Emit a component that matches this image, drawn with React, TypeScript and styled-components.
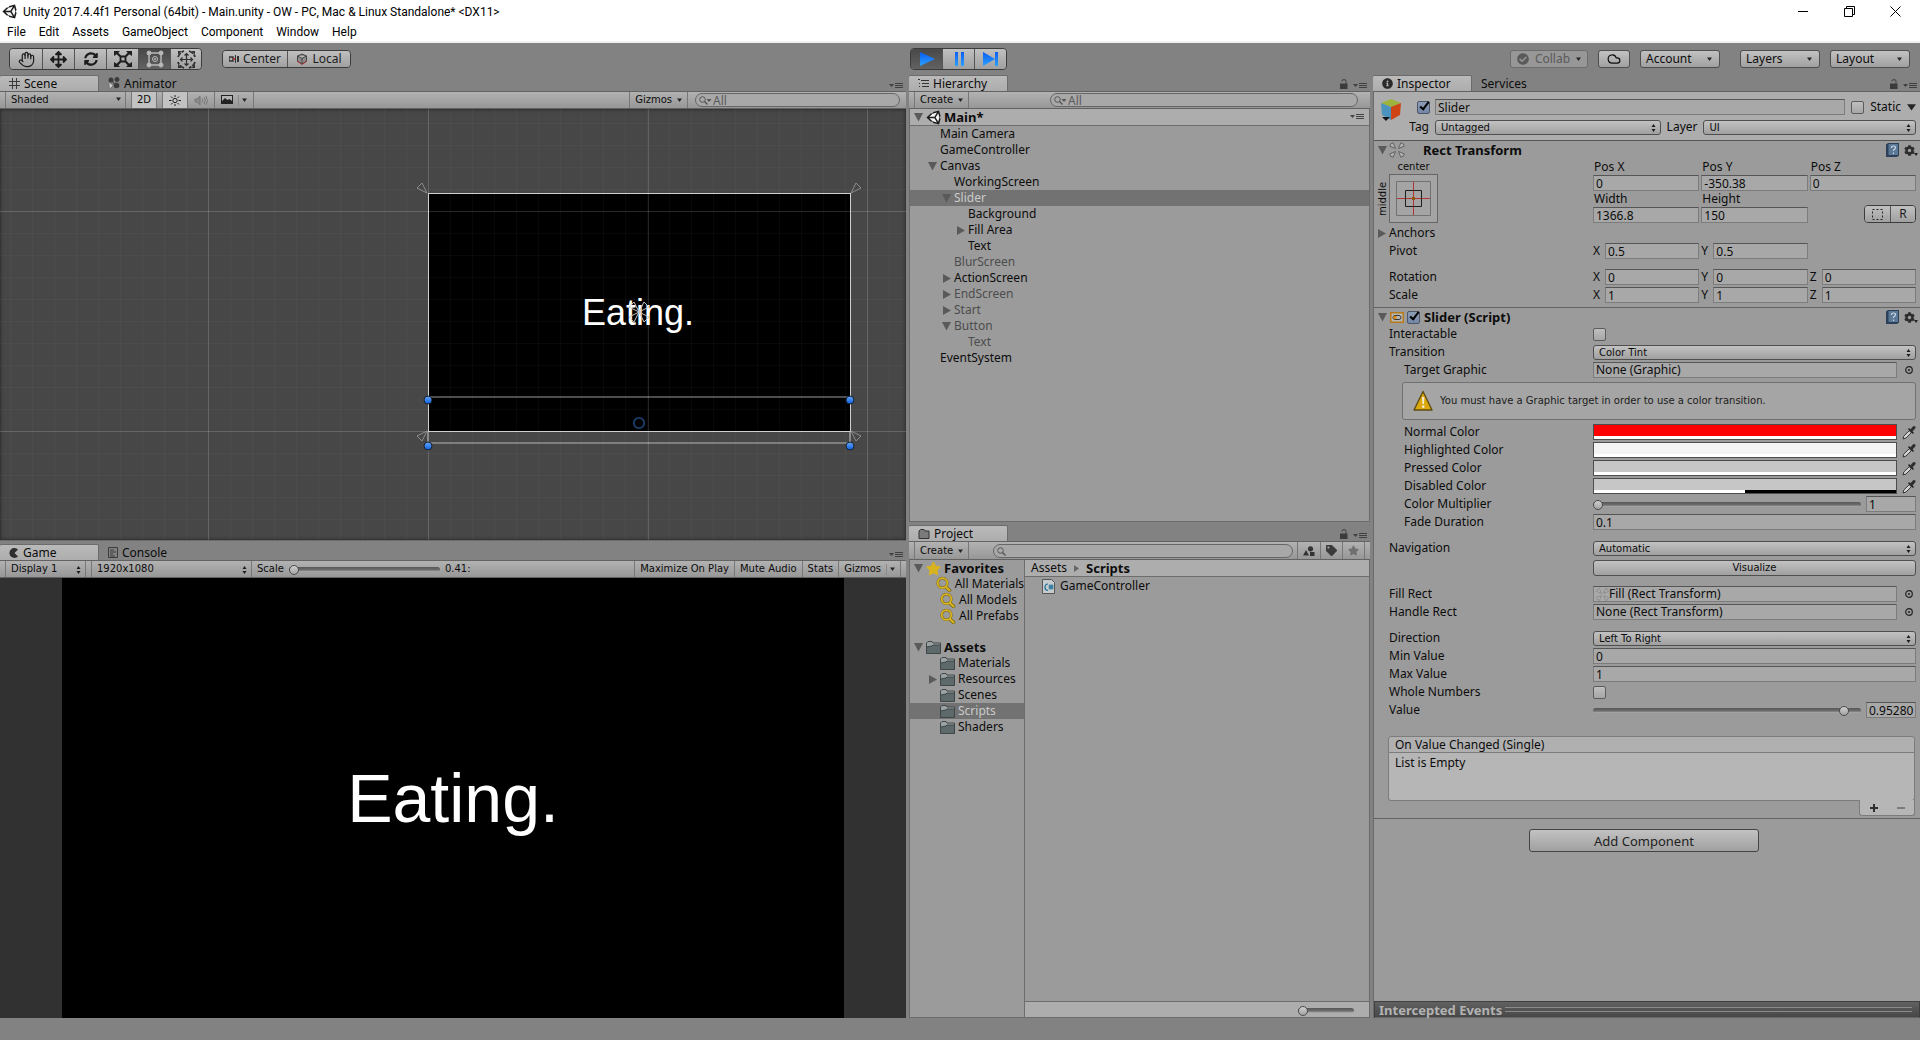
import React, { ReactNode, useId } from 'react';
import styled, { createGlobalStyle, css } from 'styled-components';
import { FaArrowsAlt, FaSyncAlt, FaStar, FaInfoCircle, FaCheckCircle, FaTag, FaCog } from 'react-icons/fa';
import { Hand, Cloud } from 'lucide-react';

const UI = '"Noto Sans", "Open Sans", sans-serif';
const SMALL = '"DejaVu Sans", Verdana, sans-serif';
const SYSTEM = 'Roboto, "Noto Sans", sans-serif';

const GlobalStyle = createGlobalStyle`
  *, *::before, *::after { box-sizing: border-box; }
  body { margin: 0; background: #828282; color: #0c0c0c; font: 12px/16px ${UI}; }
  button, input, select { font: inherit; color: inherit; margin: 0; padding: 0; border: 0; background: none; border-radius: 0; }
  ul { list-style: none; margin: 0; padding: 0; }
  h3, p { margin: 0; font-size: inherit; }
  svg { display: block; flex: none; }
`;

/* ---------- shared looks ---------- */
const raised = css`
  background: linear-gradient(#c2c2c2, #a0a0a0);
  border: 1px solid #4f4f4f;
  border-radius: 3px;
`;
const sunken = css`
  background: #a8a8a8;
  border: 1px solid #7c7c7c;
  border-top-color: #555;
`;
const smallText = css`
  font-family: ${SMALL};
  font-size: 10px;
`;

/* ---------- window frame ---------- */
const Window = styled.div`
  display: flex;
  flex-direction: column;
  min-height: 100vh;
  min-width: 1200px;
`;
const TitleBar = styled.header`
  display: flex;
  align-items: center;
  gap: 6px;
  height: 23px;
  padding: 0 2px;
  background: #fff;
  color: #000;
  font: 12px/16px ${SYSTEM};
`;
const WindowTitle = styled.span`
  flex: 1;
`;
const CaptionButton = styled.button`
  display: grid;
  place-items: center;
  width: 46px;
  height: 20px;
`;
const MenuBar = styled.nav`
  display: flex;
  gap: 13px;
  height: 20px;
  padding: 0 7px;
  background: #fff;
  border-bottom: 2px solid #f0f0f0;
  color: #000;
`;
const MenuItem = styled.button`
  font: 12px/18px ${SYSTEM};
`;
const MainToolbar = styled.div`
  display: grid;
  grid-template-columns: 910fr 463fr 547fr;
  align-items: center;
  height: 32px;
`;
const ToolGroup = styled.div`
  display: flex;
  align-items: center;
`;
const LeftTools = styled(ToolGroup)`
  padding-left: 9px;
  gap: 20px;
`;
const RightTools = styled(ToolGroup)`
  justify-content: flex-end;
  gap: 20px;
  padding-right: 10px;
`;
const ToolCluster = styled(ToolGroup)`
  gap: 10px;
`;
const Segments = styled.div`
  display: flex;
  border: 1px solid #3c3c3c;
  border-radius: 4px;
  overflow: hidden;
`;
const PlayControls = styled(Segments)`
  justify-self: start;
`;
const Segment = styled.button<{ $active?: boolean; $width: number; $small?: boolean }>`
  display: flex;
  align-items: center;
  justify-content: center;
  gap: 4px;
  width: ${p => p.$width}px;
  height: ${p => (p.$small ? 16 : 20)}px;
  background: ${p => (p.$active ? 'linear-gradient(#484848, #626262)' : 'linear-gradient(#c0c0c0, #a0a0a0)')};
  color: #1c1c1c;
  & + & { border-left: 1px solid #555; }
`;
const ToolButton = styled.button<{ $width: number; $dim?: boolean }>`
  ${raised}
  display: flex;
  align-items: center;
  justify-content: center;
  gap: 6px;
  width: ${p => p.$width}px;
  height: 18px;
  line-height: 16px;
  ${p => p.$dim && 'background: #979797; border-color: #6c6c6c; color: #5a5a5a;'}
`;
const ToolMenu = styled(ToolButton)`
  justify-content: space-between;
  padding: 0 7px 0 5px;
`;
const Spacer = styled.div<{ $width?: number }>`
  ${p => (p.$width ? `width: ${p.$width}px;` : 'flex: 1;')}
`;

/* ---------- docked panels ---------- */
const Docks = styled.main`
  flex: 1;
  display: grid;
  grid-template-columns: 906fr 461fr 547fr;
  gap: 3px;
  min-height: 900px;
`;
const Column = styled.div`
  display: flex;
  flex-direction: column;
  gap: 3px;
  min-width: 0;
`;
const Panel = styled.section<{ $grow: number }>`
  flex: ${p => p.$grow} 1 0;
  display: flex;
  flex-direction: column;
  min-height: 0;
  min-width: 0;
`;
const TabStrip = styled.div`
  display: flex;
  align-items: flex-end;
  height: 17px;
  border-bottom: 1px solid #636363;
`;
const Tab = styled.button<{ $active?: boolean }>`
  display: flex;
  align-items: center;
  gap: 4px;
  height: 16px;
  width: ${p => (p.$active ? '99px' : 'auto')};
  padding: 0 9px;
  line-height: 15px;
  ${p => p.$active && `
    background: linear-gradient(#bababa, #adadad);
    border-top: 1px solid #6c6c6c;
    border-right: 1px solid #6c6c6c;
    border-radius: 2px 2px 0 0;
  `}
`;
const TabTools = styled.div`
  display: flex;
  gap: 5px;
  align-items: flex-end;
  margin-left: auto;
  padding: 0 3px 2px 0;
  color: #3f3f3f;
`;
const IconButton = styled.button`
  display: grid;
  place-items: center;
  color: inherit;
`;
const Strip = styled.div<{ $height?: number }>`
  ${smallText}
  display: flex;
  align-items: stretch;
  height: ${p => p.$height ?? 17}px;
  padding-left: 5px;
  background: linear-gradient(#b2b2b2, #979797);
  border-bottom: 1px solid #626262;
`;
const StripButton = styled.button<{ $lit?: boolean; $first?: boolean; $icon?: boolean }>`
  display: flex;
  align-items: center;
  gap: 5px;
  padding: 0 ${p => (p.$icon ? 6 : 5)}px;
  border-right: 1px solid #777;
  white-space: nowrap;
  ${p => p.$first && 'border-left: 1px solid #777;'}
  ${p => p.$lit && 'background: #c2c2c2;'}
`;
const Divider = styled.i`
  width: 1px;
  height: 11px;
  margin-right: -2px;
  background: #8a8a8a;
`;
const StripSelect = styled.div<{ $width: number }>`
  position: relative;
  display: flex;
  width: ${p => p.$width}px;
  border-left: 1px solid #777;
  border-right: 1px solid #777;
  select { appearance: none; width: 100%; padding-left: 5px; }
  svg { position: absolute; right: 4px; top: 5px; pointer-events: none; }
`;
const StripLabel = styled.label`
  display: flex;
  align-items: center;
  gap: 5px;
  padding-left: 5px;
`;
const Search = styled.label`
  ${sunken}
  display: flex;
  align-items: center;
  gap: 1px;
  height: 14px;
  margin-top: 1px;
  padding-left: 3px;
  border-radius: 7px;
  border-color: #666;
  color: #5b5b5b;
  font: 12px/12px ${UI};
  input { flex: 1; min-width: 0; height: 12px; outline: 0; }
  input::placeholder { color: #5b5b5b; opacity: 1; }
`;
const SceneSearch = styled(Search)`
  width: 205px;
  margin-left: 7px;
  margin-right: 6px;
`;
const HierarchySearch = styled(Search)`
  width: 308px;
  margin-right: 12px;
`;
const ProjectSearch = styled(Search)`
  width: 300px;
  margin-top: 2px;
  margin-right: 4px;
`;
const PanelBody = styled.div`
  flex: 1;
  min-height: 0;
  background: #9b9b9b;
  border: 1px solid #6b6b6b;
  border-top: 0;
`;

/* ---------- scene and game views ---------- */
const SceneView = styled.div`
  flex: 1;
  min-height: 0;
  background: #474747;
  box-shadow: inset 0 0 3px 1px #2e2e2e;
  border-bottom: 1px solid #6b6b6b;
  svg { width: 100%; height: 100%; }
`;
const GameView = styled.div`
  flex: 1;
  min-height: 0;
  display: flex;
  justify-content: center;
  background: #313131;
`;
const GameScreen = styled.div`
  display: grid;
  place-items: center;
  aspect-ratio: 16 / 9;
  max-width: 100%;
  background: #000;
  color: #fff;
  font: 68px/1 "Liberation Sans", Arial, sans-serif;
`;

/* ---------- range slider ---------- */
const Range = styled.input<{ $width?: number }>`
  appearance: none;
  height: 16px;
  min-width: 0;
  ${p => (p.$width ? `width: ${p.$width}px;` : 'flex: 1;')}
  &::-webkit-slider-runnable-track {
    height: 5px;
    border-radius: 3px;
    background: linear-gradient(#575757, #6e6e6e 60%, #b4b4b4);
  }
  &::-webkit-slider-thumb {
    appearance: none;
    width: 10px;
    height: 10px;
    margin-top: -2px;
    border: 1px solid #4c4c4c;
    border-radius: 50%;
    background: linear-gradient(#cfcfcf, #a2a2a2);
  }
`;

/* ---------- trees ---------- */
const TreeRow = styled.li<{ $depth: number; $selected?: boolean; $dim?: boolean; $bold?: boolean; $base: number }>`
  display: flex;
  align-items: center;
  gap: 3px;
  height: 16px;
  padding-left: ${p => p.$base + p.$depth * 14}px;
  white-space: nowrap;
  ${p => p.$dim && 'color: #4d4d4d;'}
  ${p => p.$bold && 'font-size: 13px; font-weight: 700;'}
  ${p => p.$selected && 'background: #727272; color: #cbcbcb;'}
`;
const ArrowSlot = styled.span`
  display: grid;
  place-items: center;
  width: 9px;
  color: #5a5a5a;
`;
const SceneHeader = styled.div`
  display: flex;
  align-items: center;
  gap: 3px;
  height: 17px;
  padding: 0 5px 0 4px;
  background: #adadad;
  border-bottom: 1px solid #6e6e6e;
  font-size: 13px;
  font-weight: 700;
  button { margin-left: auto; color: #444; }
`;
const ProjectBody = styled(PanelBody)`
  display: grid;
  grid-template-columns: 115px 1fr;
`;
const FolderTree = styled.div`
  overflow: hidden;
  border-right: 1px solid #6e6e6e;
  ul + ul { margin-top: 15px; }
`;
const Files = styled.div`
  display: flex;
  flex-direction: column;
`;
const Crumbs = styled.div`
  display: flex;
  align-items: center;
  gap: 7px;
  height: 17px;
  padding-left: 6px;
  background: #adadad;
  border-bottom: 1px solid #6e6e6e;
  b { font-size: 13px; }
`;
const FileRow = styled.button`
  display: flex;
  align-items: center;
  gap: 5px;
  height: 18px;
  padding-left: 17px;
`;
const ZoomBar = styled.div`
  display: flex;
  justify-content: flex-end;
  height: 16px;
  margin-top: auto;
  padding-right: 15px;
  background: #adadad;
  border-top: 1px solid #6e6e6e;
`;

/* ---------- inspector ---------- */
const InspectorBody = styled.div`
  flex: 1;
  display: flex;
  flex-direction: column;
  background: #9b9b9b;
  border-left: 1px solid #6b6b6b;
`;
const ObjectHeader = styled.div`
  display: grid;
  grid-template-columns: 61px 1fr;
  height: 49px;
  padding: 7px 4px 0 0;
  background: #adadad;
  border-bottom: 1px solid #555;
`;
const ObjectMark = styled.div`
  display: grid;
  grid-template-columns: 37px 1fr;
  grid-template-rows: 16px 20px;
  padding-left: 6px;
  label { grid-column: 1 / 3; justify-self: end; align-self: end; padding-right: 6px; }
  input { margin-top: 2px; }
`;
const HeaderLines = styled.div`
  display: flex;
  flex-direction: column;
  gap: 4px;
`;
const HeaderLine = styled.div`
  display: flex;
  align-items: center;
  gap: 6px;
`;
const Check = styled.input`
  appearance: none;
  display: grid;
  place-items: center;
  width: 13px;
  height: 13px;
  background: linear-gradient(#bfbfbf, #a6a6a6);
  border: 1px solid #5c5c5c;
  border-radius: 2px;
  &:checked { background: linear-gradient(#8d9cb4, #7387a6); border-color: #4c5668; }
  &:checked::after {
    content: '';
    width: 5px;
    height: 10px;
    margin: -5px 0 0 2px;
    border: solid #000;
    border-width: 0 2px 2px 0;
    transform: rotate(38deg);
  }
`;
const TextField = styled.input`
  ${sunken}
  flex: 1;
  width: 100%;
  min-width: 0;
  height: 16px;
  padding-left: 2px;
  line-height: 14px;
`;
const NumberBox = styled(TextField)`
  flex: none;
  width: 50px;
`;
const SelectBox = styled.div<{ $grow?: number }>`
  position: relative;
  flex: ${p => p.$grow ?? 1} 1 0;
  display: flex;
  min-width: 0;
  select {
    ${raised}
    ${smallText}
    appearance: none;
    width: 100%;
    height: 15px;
    padding-left: 5px;
    line-height: 13px;
  }
  svg { position: absolute; right: 5px; top: 4px; pointer-events: none; }
`;
const Component = styled.section`
  display: flex;
  flex-direction: column;
  gap: 2px;
  padding: 0 4px 4px 2px;
  border-bottom: 1px solid #636363;
`;
const ComponentHeader = styled.div<{ $gap: number }>`
  display: flex;
  align-items: center;
  height: 18px;
  margin-bottom: -2px;
  padding-left: 2px;
  h3 { margin-left: ${p => p.$gap}px; font-size: 13px; }
  input { margin-left: 3px; }
`;
const HeaderTools = styled.div`
  display: flex;
  align-items: center;
  gap: 5px;
  margin: 0 -2px 0 auto;
  color: #2c2c2c;
`;
const Property = styled.div<{ $indent?: boolean; $space?: boolean }>`
  display: grid;
  grid-template-columns: ${p => (p.$indent ? '189px' : '204px')} minmax(0, 1fr);
  align-items: center;
  height: 16px;
  margin-top: ${p => (p.$space ? 8 : 0)}px;
  padding-left: ${p => (p.$indent ? 28 : 13)}px;
`;
const Field = styled.div`
  display: flex;
  align-items: center;
  gap: 5px;
  height: 16px;
  min-width: 0;
`;
const Triple = styled.div`
  display: grid;
  grid-template-columns: repeat(3, minmax(0, 1fr));
  gap: 0 2px;
`;
const Axis = styled.label`
  display: grid;
  grid-template-columns: 12px 1fr;
  input { width: 100%; }
`;
const StackedField = styled.label`
  display: grid;
  grid-template-rows: 16px 16px;
  span { padding-left: 1px; }
`;
const RectTop = styled.div`
  display: grid;
  grid-template-columns: 217px minmax(0, 1fr);
`;
const AnchorPreset = styled.div`
  ${smallText}
  display: grid;
  grid-template-columns: 13px 49px;
  grid-template-rows: 15px 49px;
  line-height: 15px;
  span:first-child { grid-column: 2; text-align: center; }
`;
const VerticalWord = styled.span`
  writing-mode: vertical-rl;
  transform: rotate(180deg);
  text-align: center;
  line-height: 13px;
`;
const PresetButton = styled.button`
  display: grid;
  place-items: center;
  background: #a4a4a4;
  border: 1px solid #666;
`;
const BlueprintCell = styled.div`
  display: flex;
  justify-content: flex-end;
  align-items: flex-end;
`;
const Foldout = styled.button`
  display: flex;
  align-items: center;
  gap: 3px;
  height: 16px;
  padding-left: 1px;
`;
const ObjectField = styled.button`
  ${sunken}
  flex: 1;
  display: flex;
  align-items: center;
  height: 16px;
  padding-left: 2px;
`;
const Picker = styled.button`
  display: grid;
  place-items: center;
  width: 14px;
`;
const HelpBox = styled.div`
  ${smallText}
  display: flex;
  align-items: center;
  gap: 7px;
  height: 38px;
  margin: 2px 0 2px 26px;
  padding-left: 10px;
  background: #a5a5a5;
  border: 1px solid #707070;
  border-radius: 3px;
  color: #1c1c1c;
`;
const Swatch = styled.button<{ $color: string; $alpha: number }>`
  flex: 1;
  display: flex;
  height: 16px;
  border: 1px solid #4d4d4d;
  background:
    linear-gradient(90deg, #fff ${p => p.$alpha}%, #000 ${p => p.$alpha}%) bottom / 100% 3px no-repeat,
    ${p => p.$color};
`;
const WideButton = styled.button`
  ${raised}
  ${smallText}
  flex: 1;
  height: 16px;
  line-height: 14px;
`;
const EventList = styled.div`
  margin: 16px 1px 0 12px;
`;
const EventHeader = styled.div`
  height: 17px;
  padding-left: 6px;
  background: #b0b0b0;
  border: 1px solid #7c7c7c;
  border-radius: 3px 3px 0 0;
  line-height: 16px;
`;
const EventBody = styled.p`
  height: 48px;
  padding: 2px 6px;
  background: #b6b6b6;
  border: 1px solid #7c7c7c;
  border-top: 0;
  border-radius: 0 0 3px 3px;
`;
const EventButtons = styled.div`
  display: flex;
  justify-content: space-around;
  width: 56px;
  height: 16px;
  margin: -1px 0 -2px auto;
  background: #b6b6b6;
  border: 1px solid #7c7c7c;
  border-top: 0;
  border-radius: 0 0 3px 3px;
  color: #2e2e2e;
`;
const AddButton = styled.button`
  ${raised}
  align-self: center;
  width: 230px;
  height: 23px;
  margin: 10px 6px 0 0;
  border-color: #444;
  color: #222;
  font-size: 13px;
`;
const Intercepted = styled.div`
  display: flex;
  align-items: center;
  gap: 3px;
  height: 17px;
  margin-top: auto;
  padding: 0 7px 0 4px;
  background: linear-gradient(#616161, #474747);
  border: 1px solid #3f3f3f;
  border-bottom-color: #666;
  color: #b3b3b3;
  font-size: 13px;
  font-weight: 700;
`;
const Grip = styled.i`
  flex: 1;
  height: 5px;
  border: solid #8b8b8b;
  border-width: 1px 0;
`;
const StatusBar = styled.footer`
  height: 22px;
`;

/* ---------- icons ---------- */
const UnityLogo = ({ size }: { size: number }) => (
  <svg width={size} height={size} viewBox="0 0 512 512" fill="#1b1b1b">
    <path d="M498.11 206.4L445.31 14.72 248.2 66.08 219.05 116.4l-59.2-.43L15.54 256l144.31 140.06 59.2-.43 29.15 50.32 197.08 51.36 52.8-191.62-30-49.63z" />
    <path fill="#f4f4f4" d="M223.77 124.2L374.55 86.51 288 232.33H114.87zm0 263.63L114.87 279.71H288l86.55 145.81zm193 14L330.17 256l86.58-145.84L458.56 256z" />
  </svg>
);
const Caret = ({ width = 5 }: { width?: number }) => (
  <svg width={width} height={width - 1} viewBox="0 0 10 8"><path d="M0 1h10L5 8z" fill="#262626" /></svg>
);
const UpDown = () => (
  <svg width="5" height="8" viewBox="0 0 5 8" fill="#1c1c1c"><path d="M.5 3l2-3 2 3zM.5 5h4l-2 3z" /></svg>
);
const Arrow = ({ open }: { open: boolean }) => (
  <svg width="9" height="9" viewBox="0 0 9 9" fill="currentColor"><path d={open ? 'M0 0h9L4.5 8.5z' : 'M1 0v9l8-4.5z'} /></svg>
);
const PanelMenuIcon = () => (
  <svg width="14" height="6" viewBox="0 0 14 6" fill="currentColor"><path d="M0 1h5L2.5 4zM6 0h8v1H6zM6 2h8v1H6zM6 4h8v1H6z" /></svg>
);
const LockIcon = () => (
  <svg width="8" height="10" viewBox="0 0 8 10" fill="none"><path d="M0 4.5h7.5V10H0z" fill="#3b3b3b" /><path d="M2 2.5Q2 .6 4 .6t2 2V5" stroke="#4a4a4a" strokeWidth="1.100" /></svg>
);
const Magnifier = ({ menu }: { menu?: boolean }) => (
  <svg width={menu ? 13 : 9} height="9" viewBox={menu ? '0 0 13 9' : '0 0 9 9'} fill="none" stroke="#555">
    <circle cx="3.5" cy="3.5" r="2.8" /><path d="M5.5 5.5l3 3" strokeWidth="1.4" />
    {menu && <path d="M7.5 3h5L10 6z" fill="#555" stroke="none" />}
  </svg>
);
const ScaleIcon = () => (
  <svg width="18" height="18" viewBox="0 0 18 18" fill="#1f1f1f">
    <path d="M0 1h6L4.300 2.700 7 5.400 5.400 7 2.700 4.300 0 6zM18 1v5l-2.700-1.700L12.600 7 11 5.400l2.700-2.700L12 1zM0 17v-5l2.700 1.700L5.400 11 7 12.600l-2.700 2.700L6 17zM18 17h-6l1.700-1.700L11 12.600l1.600-1.600 2.700 2.700L18 12z" />
    <path d="M6.500 6.500h5v5h-5z" fill="none" stroke="#1f1f1f" strokeWidth="1.800" />
  </svg>
);
const RectIcon = () => (
  <svg width="18" height="18" viewBox="0 0 18 18" fill="#b9b9b9" stroke="#b9b9b9">
    <path d="M3 3h12v12H3z" fill="none" strokeWidth="1.500" />
    <circle cx="3" cy="3" r="2" /><circle cx="15" cy="3" r="2" /><circle cx="3" cy="15" r="2" /><circle cx="15" cy="15" r="2" />
    <circle cx="9" cy="9" r="2.500" fill="none" /><circle cx="9" cy="9" r=".6" />
  </svg>
);
const TransformIcon = () => (
  <svg width="19" height="19" viewBox="0 0 19 19" fill="none" stroke="#303030">
    <path d="M1 7a9 9 0 016-6M12 1a9 9 0 016 6M18 12a9 9 0 01-6 6M7 18a9 9 0 01-6-6" strokeWidth="1.800" strokeDasharray="5 1" />
    <path d="M1 1h3.500L1 4.500zM18 1h-3.500L18 4.500zM1 18h3.500L1 14.500zM18 18h-3.500l3.500-3.500z" fill="#303030" stroke="none" />
    <path d="M9.500 3.500v12M3.500 9.500h12M7.500 5.500l2-2 2 2M7.500 13.500l2 2 2-2M5.500 7.500l-2 2 2 2M13.500 7.500l2 2-2 2" strokeWidth="1.200" />
  </svg>
);
const PivotIcon = () => (
  <svg width="10" height="8" viewBox="0 0 10 8" fill="#333"><path d="M0 2h4v4H0z" fill="none" stroke="#333" strokeWidth="1.500" /><path d="M6 0h1v8H6zM8 1h2v6H8z" /><path d="M4 3h2v2H4z" fill="#b03b3b" /></svg>
);
const LocalIcon = () => (
  <svg width="12" height="12" viewBox="0 0 12 12" fill="#8d8d8d" stroke="#444"><path d="M6 1l4.500 2v5L6 11 1.500 8V3zM1.500 3L6 5.500 10.500 3M6 5.500V11" /><path d="M1 8l5 3.500L11 8" fill="none" stroke="#a33" /></svg>
);
const PlayIcon = ({ kind }: { kind: 'play' | 'pause' | 'step' }) => (
  <svg width="16" height="14" viewBox="0 0 16 14">
    <defs><linearGradient id={`glow-${kind}`} x2="0" y2="1"><stop offset="0" stopColor="#0b5cf0" /><stop offset="1" stopColor="#2ba0ff" /></linearGradient></defs>
    <path fill={`url(#glow-${kind})`} d={{ play: 'M1 0l15 7-15 7z', pause: 'M4 0h3v14H4zM10 0h3v14h-3z', step: 'M0 0l12 7-12 7zM12 0h3v14h-3z' }[kind]} />
  </svg>
);
const GridIcon = () => (
  <svg width="11" height="11" viewBox="0 0 11 11" stroke="#3b3b3b"><path d="M3.500 0v11M7.500 0v11M0 3.500h11M0 7.500h11" /></svg>
);
const AnimatorIcon = () => (
  <svg width="12" height="12" viewBox="0 0 12 12" fill="#3b3b3b"><circle cx="3" cy="3" r="2.500" /><circle cx="9" cy="2.500" r="2.400" /><circle cx="8.500" cy="8.500" r="2.800" /><path d="M5 5l2 3" stroke="#3b3b3b" /><path d="M1 5l4 3.500L1.500 12z" fill="#d6d6d6" stroke="#555" strokeWidth=".5" /></svg>
);
const HierarchyIcon = () => (
  <svg width="11" height="9" viewBox="0 0 11 9" fill="#333"><path d="M0 0h2v1H0zM3 1h8v1H3zM1 4h1v1H1zM4 4h7v1H4zM1 7h1v1H1zM4 7h7v1H4z" /></svg>
);
const FolderOutline = () => (
  <svg width="12" height="10" viewBox="0 0 12 10" fill="#7a7a7a" stroke="#333"><path d="M1 9.500V2L2.500.5H6L7 2h4v7.500z" /></svg>
);
const PacIcon = () => (
  <svg width="10" height="10" viewBox="0 0 10 10" fill="#2e2e2e"><path d="M9 1.500A5 5 0 109 8.500L5.500 5z" /></svg>
);
const ConsoleIcon = () => (
  <svg width="10" height="11" viewBox="0 0 10 11" fill="none" stroke="#333"><path d="M.5.5h9v10h-9zM2 3h4M2 5h6M2 7h3M2 9h5" strokeWidth=".9" /></svg>
);
const SunIcon = () => (
  <svg width="12" height="11" viewBox="0 0 12 11" fill="none" stroke="#222"><circle cx="6" cy="5.500" r="2.200" /><path d="M6 0v2M6 9v2M0 5.500h2.500M9.500 5.500H12M2 1.500l1.500 1.500M10 1.500L8.500 3M2 9.500L3.500 8M10 9.500L8.500 8" /></svg>
);
const AudioIcon = () => (
  <svg width="14" height="11" viewBox="0 0 14 11" fill="none" stroke="#777"><path d="M1 4h2l3-3v9L3 7H1z" fill="#8a8a8a" /><path d="M8 3.500q1.500 2 0 4M10 2q2.500 3.500 0 7M12 1q3 4.500 0 9" /></svg>
);
const ImageIcon = () => (
  <svg width="12" height="10" viewBox="0 0 12 10"><path d="M0 0h12v9H0z" fill="#222" /><path d="M1 6l3-3 2.500 2L8.500 4 11 6V1H1z" fill="#b5b5b5" /></svg>
);
const FolderIcon = () => (
  <svg width="15" height="13" viewBox="0 0 15 13" stroke="#3e4647"><path d="M.5 12V2L2 .5h4L7 2h7.500v10z" fill="#9aa2a3" /><path d="M.5 12.500V6L6 5l1-1h7.500v8.500z" fill="#5d696b" /></svg>
);
const SavedSearchIcon = () => (
  <svg width="16" height="15" viewBox="0 0 16 15" fill="none"><path d="M9.500 9.500l5 5" stroke="#7a6613" strokeWidth="3.500" /><circle cx="6.500" cy="6" r="4.800" stroke="#7a6613" strokeWidth="2.600" /><path d="M9.500 9.500l4.500 4.500" stroke="#dbb61e" strokeWidth="2" /><circle cx="6.500" cy="6" r="4.800" stroke="#dbb61e" strokeWidth="1.700" /></svg>
);
const ScriptIcon = () => (
  <svg width="13" height="15" viewBox="0 0 13 15" fill="none"><path d="M.5.5h9l3 3v11H.5z" fill="#c6cbcd" stroke="#555" /><path d="M6 5q-3 0-3 3.200T6 11.500M8 5.500v5M10 5.500v5M6.500 7h5M6.500 9h5" stroke="#1d6f96" strokeWidth="1.200" /></svg>
);
const ShapesIcon = () => (
  <svg width="12" height="10" viewBox="0 0 12 10" fill="#333"><circle cx="7.500" cy="2.800" r="2.600" /><path d="M3 4l3 5.500H0zM7 6h4.500v4H7z" /></svg>
);
const CubeIcon = () => (
  <svg width="23" height="22" viewBox="0 0 23 22"><path d="M11 0l10 4-10 4L1 4z" fill="#9db33c" /><path d="M1 4l10 4v13L2 16z" fill="#4b93bd" /><path d="M21 4L11 8v13l9-5z" fill="#cf4415" /><path d="M2 18h8l-4 4z" fill="#151515" /></svg>
);
const AnchorMarks = ({ size = 16, color = '#636363' }: { size?: number; color?: string }) => (
  <svg width={size} height={size} viewBox="0 0 16 16" fill="#b0b0b0" stroke={color}>
    <path d="M6.500 6.500L.8 4.200Q1 1 4.200.8zM9.500 6.500L11.800.8Q15 1 15.200 4.200zM6.500 9.500L4.200 15.200Q1 15 .8 11.800zM9.500 9.500l5.700 2.300Q15 15 11.800 15.200z" />
  </svg>
);
const HelpBook = () => (
  <svg width="13" height="14" viewBox="0 0 13 14"><path d="M0 1.500L2 0h11v12.500L11 14H0z" fill="#2c4059" /><path d="M2.500 1H12v11H2.500z" fill="#5b7897" /><path d="M5.500 5q0-2 2-2t2 1.800Q9.500 6 7.500 7v1M7.500 9.500V11" fill="none" stroke="#c9d6e4" strokeWidth="1.200" /></svg>
);
const GearMenu = () => (
  <svg width="14" height="13" viewBox="0 0 14 13"><FaCog x="0" y="1" size={11} /><path d="M10 9h4l-2 3z" fill="#222" /></svg>
);
const SliderIcon = () => (
  <svg width="14" height="11" viewBox="0 0 14 11" fill="none"><path d="M.75.75h12.500v9.500H.75z" fill="#b7b7b7" stroke="#b87a18" strokeWidth="1.500" /><rect x="3" y="3.500" width="8" height="4" rx="2" stroke="#333" /><circle cx="5" cy="5.500" r="1.800" fill="#d98b14" /></svg>
);
const PickerIcon = () => (
  <svg width="8" height="8" viewBox="0 0 8 8" fill="none" stroke="#222"><circle cx="4" cy="4" r="3.300" strokeWidth="1.200" /><circle cx="4" cy="4" r=".6" fill="#222" /></svg>
);
const WarningIcon = () => (
  <svg width="20" height="22" viewBox="0 0 20 22"><path d="M10 1.500L19 20H1z" fill="#dca80e" stroke="#5f4c10" strokeWidth="1.400" strokeLinejoin="round" /><path d="M9 7h2.400l-.5 7H9.500zM9 15.500h2.400v2.300H9z" fill="#f4efdc" /></svg>
);
const Dropper = () => (
  <svg width="14" height="15" viewBox="0 0 14 15" fill="none"><path d="M1 14l.8-3 5.700-5.500 2 2L4 13z" fill="#d4d4d4" stroke="#2a2a2a" strokeWidth=".9" /><path d="M7 4l4 4" stroke="#1e1e1e" strokeWidth="1.600" strokeLinecap="round" /><path d="M9 6l3-3.500" stroke="#2e2e2e" strokeWidth="3" strokeLinecap="round" /></svg>
);
const PresetDiagram = () => (
  <svg width="35" height="35" viewBox="0 0 35 35" fill="none"><path d="M.5.5h34v34H.5z" stroke="#717171" /><path d="M17.500 1v33M1 17.500h33" stroke="#b33434" /><path d="M9.500 9.500h16v16h-16z" stroke="#1d1d1d" /><path d="M16 16h3v3h-3z" fill="#8a5b10" /></svg>
);
const DashedBox = () => (
  <svg width="11" height="11" viewBox="0 0 11 11" fill="none"><path d="M.5.5h10v10H.5z" stroke="#222" strokeDasharray="2 2" /></svg>
);

/* ---------- scene drawing ---------- */
const SceneDrawing = () => {
  const verticals = Array.from({ length: 42 }, (_, i) => Math.round(208 + (i - 9) * 21.97));
  const horizontals = Array.from({ length: 20 }, (_, i) => Math.round(102 + (i - 4) * 21.97));
  const marker = 'M0 0L-10 -5L-5 -10Z';
  return (
    <svg aria-label="Scene view">
      <defs>
        <linearGradient id="knob" x2="0" y2="1"><stop offset="0" stopColor="#68a6f5" /><stop offset="1" stopColor="#0a5fe0" /></linearGradient>
      </defs>
      <rect x="428" y="84" width="422" height="238" fill="#000" />
      <g stroke="#fff" strokeOpacity=".03" shapeRendering="crispEdges">
        {verticals.map(x => <line key={x} x1={x} x2={x} y1="0" y2="100%" />)}
        {horizontals.map(y => <line key={y} x1="0" x2="100%" y1={y} y2={y} />)}
      </g>
      <g stroke="#fff" strokeOpacity=".14" shapeRendering="crispEdges">
        {[208, 428, 648, 867].map(x => <line key={x} x1={x} x2={x} y1="0" y2="100%" />)}
        {[102, 322].map(y => <line key={y} x1="0" x2="100%" y1={y} y2={y} />)}
      </g>
      <text x="582" y="216" fill="#fff" fontFamily="Liberation Sans, Arial, sans-serif" fontSize="36">Eating.</text>
      <g fill="none">
        <path d="M428 289H850M428 335H850" stroke="#fff" strokeOpacity=".3" strokeWidth="2" transform="translate(0 -1)" />
        <path d="M428 322V334M850 322V334" stroke="#8a8a8a" strokeWidth="2" />
        <path d="M428 84H850V322H428Z" stroke="#d0d0d0" shapeRendering="crispEdges" />
      </g>
      <g fill="none" stroke="#8d8d8d">
        <path d={marker} transform="translate(427 84)" />
        <path d={marker} transform="translate(851 84) scale(-1 1)" />
        <path d={marker} transform="translate(427 322) scale(1 -1)" />
        <path d={marker} transform="translate(851 322) scale(-1 -1)" />
        <g stroke="#c4c4c4" transform="translate(639 203)">
          <path d={marker} /><path d={marker} transform="scale(-1 1)" /><path d={marker} transform="scale(1 -1)" /><path d={marker} transform="scale(-1 -1)" />
        </g>
      </g>
      <circle cx="639" cy="314" r="5.200" fill="none" stroke="#1c3f6b" strokeWidth="1.800" />
      {[[428, 291], [850, 291], [428, 337], [850, 337]].map(([x, y]) => (
        <circle key={`${x}-${y}`} cx={x} cy={y} r="4" fill="url(#knob)" stroke="#17202c" />
      ))}
    </svg>
  );
};

/* ---------- composed parts ---------- */
const Select = ({ id, value, grow }: { id?: string; value: string; grow?: number }) => (
  <SelectBox $grow={grow}>
    <select id={id} defaultValue={value}><option>{value}</option></select>
    <UpDown />
  </SelectBox>
);
const Lock = () => <IconButton aria-label="Lock panel"><LockIcon /></IconButton>;
const PanelMenu = () => <IconButton aria-label="Panel menu"><PanelMenuIcon /></IconButton>;

const PropertyRow = ({ label, indent, space, children }: { label: string; indent?: boolean; space?: boolean; children: (id: string) => ReactNode }) => {
  const id = useId();
  return (
    <Property $indent={indent} $space={space}>
      <label htmlFor={id}>{label}</label>
      <Field>{children(id)}</Field>
    </Property>
  );
};
const ObjectPicker = ({ id, value, icon }: { id: string; value: string; icon?: ReactNode }) => (
  <>
    <ObjectField id={id}>{icon}{value}</ObjectField>
    <Picker aria-label={`Pick ${value}`}><PickerIcon /></Picker>
  </>
);
const AxisFields = ({ label, values, space }: { label: string; values: string[]; space?: boolean }) => (
  <Property $space={space}>
    <span>{label}</span>
    <Triple>
      {values.map((v, i) => <Axis key={i}>{'XYZ'[i]}<TextField defaultValue={v} /></Axis>)}
    </Triple>
  </Property>
);
const HeaderActions = () => (
  <HeaderTools>
    <IconButton aria-label="Help"><HelpBook /></IconButton>
    <IconButton aria-label="Component menu"><GearMenu /></IconButton>
  </HeaderTools>
);

type Node = { name: string; depth: number; open?: boolean; dim?: boolean; selected?: boolean };
const objects: Node[] = [
  { name: 'Main Camera', depth: 0 },
  { name: 'GameController', depth: 0 },
  { name: 'Canvas', depth: 0, open: true },
  { name: 'WorkingScreen', depth: 1 },
  { name: 'Slider', depth: 1, open: true, selected: true },
  { name: 'Background', depth: 2 },
  { name: 'Fill Area', depth: 2, open: false },
  { name: 'Text', depth: 2 },
  { name: 'BlurScreen', depth: 1, dim: true },
  { name: 'ActionScreen', depth: 1, open: false },
  { name: 'EndScreen', depth: 1, open: false, dim: true },
  { name: 'Start', depth: 1, open: false, dim: true },
  { name: 'Button', depth: 1, open: true, dim: true },
  { name: 'Text', depth: 2, dim: true },
  { name: 'EventSystem', depth: 0 },
];
const folders: Node[] = [
  { name: 'Materials', depth: 1 },
  { name: 'Resources', depth: 1, open: false },
  { name: 'Scenes', depth: 1 },
  { name: 'Scripts', depth: 1, selected: true },
  { name: 'Shaders', depth: 1 },
];
const tints: [string, string, number][] = [
  ['Normal Color', '#ff0000', 100],
  ['Highlighted Color', '#f3f3f3', 100],
  ['Pressed Color', '#c6c6c6', 100],
  ['Disabled Color', '#c6c6c6', 50],
];

const ScenePanel = () => (
  <Panel $grow={466}>
    <TabStrip>
      <Tab $active><GridIcon />Scene</Tab>
      <Tab><AnimatorIcon />Animator</Tab>
      <TabTools><PanelMenu /></TabTools>
    </TabStrip>
    <Strip>
      <StripSelect $width={121}><select aria-label="Draw mode"><option>Shaded</option></select><Caret /></StripSelect>
      <Spacer $width={5} />
      <StripButton $first $lit>2D</StripButton>
      <Spacer $width={5} />
      <StripButton $first $lit $icon aria-label="Lighting"><SunIcon /></StripButton>
      <StripButton $icon aria-label="Audio"><AudioIcon /></StripButton>
      <StripButton $icon aria-label="Effects"><ImageIcon /><Divider /><Caret /></StripButton>
      <Spacer />
      <StripButton $first>Gizmos<Caret /></StripButton>
      <SceneSearch><Magnifier menu /><input aria-label="Search scene" placeholder="All" /></SceneSearch>
    </Strip>
    <SceneView><SceneDrawing /></SceneView>
  </Panel>
);

const GamePanel = () => (
  <Panel $grow={474}>
    <TabStrip>
      <Tab $active><PacIcon />Game</Tab>
      <Tab><ConsoleIcon />Console</Tab>
      <TabTools><PanelMenu /></TabTools>
    </TabStrip>
    <Strip>
      <StripSelect $width={81}><select aria-label="Display"><option>Display 1</option></select><UpDown /></StripSelect>
      <Spacer $width={5} />
      <StripSelect $width={161}><select aria-label="Resolution"><option>1920x1080</option></select><UpDown /></StripSelect>
      <StripLabel>Scale<Range type="range" $width={151} min={0} max={100} defaultValue={0} />0.41:</StripLabel>
      <Spacer />
      <StripButton $first>Maximize On Play</StripButton>
      <StripButton>Mute Audio</StripButton>
      <StripButton>Stats</StripButton>
      <StripButton>Gizmos<Divider /><Caret /></StripButton>
      <Spacer $width={5} />
    </Strip>
    <GameView><GameScreen>Eating.</GameScreen></GameView>
  </Panel>
);

const HierarchyPanel = () => (
  <Panel $grow={447}>
    <TabStrip>
      <Tab $active><HierarchyIcon />Hierarchy</Tab>
      <TabTools><Lock /><PanelMenu /></TabTools>
    </TabStrip>
    <Strip>
      <StripButton $first>Create<Caret /></StripButton>
      <Spacer />
      <HierarchySearch><Magnifier menu /><input aria-label="Search hierarchy" placeholder="All" /></HierarchySearch>
    </Strip>
    <PanelBody>
      <SceneHeader>
        <ArrowSlot><Arrow open /></ArrowSlot><UnityLogo size={15} />Main*
        <PanelMenu />
      </SceneHeader>
      <ul role="tree">
        {objects.map((o, i) => (
          <TreeRow key={i} role="treeitem" $base={18} $depth={o.depth} $dim={o.dim} $selected={o.selected}>
            <ArrowSlot>{o.open !== undefined && <Arrow open={o.open} />}</ArrowSlot>{o.name}
          </TreeRow>
        ))}
      </ul>
    </PanelBody>
  </Panel>
);

const ProjectPanel = () => (
  <Panel $grow={493}>
    <TabStrip>
      <Tab $active><FolderOutline />Project</Tab>
      <TabTools><Lock /><PanelMenu /></TabTools>
    </TabStrip>
    <Strip $height={18}>
      <StripButton $first>Create<Caret /></StripButton>
      <Spacer />
      <ProjectSearch><Magnifier /><input aria-label="Search project" /></ProjectSearch>
      <StripButton $first aria-label="Filter by type"><ShapesIcon /></StripButton>
      <StripButton aria-label="Filter by label"><FaTag size={11} color="#3b3b3b" /></StripButton>
      <StripButton aria-label="Save search"><FaStar size={11} color="#6f6f6f" /></StripButton>
      <Spacer $width={5} />
    </Strip>
    <ProjectBody>
      <FolderTree>
        <ul role="tree">
          <TreeRow role="treeitem" $base={4} $depth={0} $bold><ArrowSlot><Arrow open /></ArrowSlot><FaStar size={15} color="#d9b31f" />Favorites</TreeRow>
          {['All Materials', 'All Models', 'All Prefabs'].map(n => (
            <TreeRow role="treeitem" key={n} $base={4} $depth={1}><ArrowSlot /><SavedSearchIcon />{n}</TreeRow>
          ))}
        </ul>
        <ul role="tree">
          <TreeRow role="treeitem" $base={4} $depth={0} $bold><ArrowSlot><Arrow open /></ArrowSlot><FolderIcon />Assets</TreeRow>
          {folders.map(f => (
            <TreeRow role="treeitem" key={f.name} $base={4} $depth={f.depth} $selected={f.selected}>
              <ArrowSlot>{f.open !== undefined && <Arrow open={f.open} />}</ArrowSlot><FolderIcon />{f.name}
            </TreeRow>
          ))}
        </ul>
      </FolderTree>
      <Files>
        <Crumbs>Assets<svg width="5" height="7" viewBox="0 0 5 7"><path d="M0 0v7l5-3.500z" fill="#666" /></svg><b>Scripts</b></Crumbs>
        <FileRow><ScriptIcon />GameController</FileRow>
        <ZoomBar><Range aria-label="Icon size" type="range" $width={56} min={0} max={100} defaultValue={0} /></ZoomBar>
      </Files>
    </ProjectBody>
  </Panel>
);

const RectTransform = () => (
  <Component>
    <ComponentHeader $gap={18}>
      <ArrowSlot><Arrow open /></ArrowSlot><Spacer $width={2} /><AnchorMarks /><h3>Rect Transform</h3><HeaderActions />
    </ComponentHeader>
    <RectTop>
      <AnchorPreset>
        <span>center</span>
        <VerticalWord>middle</VerticalWord>
        <PresetButton aria-label="Anchor presets"><PresetDiagram /></PresetButton>
      </AnchorPreset>
      <Triple>
        <StackedField><span>Pos X</span><TextField defaultValue="0" /></StackedField>
        <StackedField><span>Pos Y</span><TextField defaultValue="-350.38" /></StackedField>
        <StackedField><span>Pos Z</span><TextField defaultValue="0" /></StackedField>
        <StackedField><span>Width</span><TextField defaultValue="1366.8" /></StackedField>
        <StackedField><span>Height</span><TextField defaultValue="150" /></StackedField>
        <BlueprintCell>
          <Segments>
            <Segment $width={25} $small aria-label="Blueprint mode"><DashedBox /></Segment>
            <Segment $width={25} $small>R</Segment>
          </Segments>
        </BlueprintCell>
      </Triple>
    </RectTop>
    <Foldout><ArrowSlot><Arrow open={false} /></ArrowSlot>Anchors</Foldout>
    <AxisFields label="Pivot" values={['0.5', '0.5']} />
    <AxisFields label="Rotation" values={['0', '0', '0']} space />
    <AxisFields label="Scale" values={['1', '1', '1']} />
  </Component>
);

const SliderScript = () => (
  <Component>
    <ComponentHeader $gap={4}>
      <ArrowSlot><Arrow open /></ArrowSlot><Spacer $width={3} /><SliderIcon />
      <Check type="checkbox" aria-label="Enable Slider" defaultChecked /><h3>Slider (Script)</h3><HeaderActions />
    </ComponentHeader>
    <PropertyRow label="Interactable">{id => <Check id={id} type="checkbox" />}</PropertyRow>
    <PropertyRow label="Transition">{id => <Select id={id} value="Color Tint" />}</PropertyRow>
    <PropertyRow label="Target Graphic" indent>{id => <ObjectPicker id={id} value="None (Graphic)" />}</PropertyRow>
    <HelpBox><WarningIcon />You must have a Graphic target in order to use a color transition.</HelpBox>
    {tints.map(([label, color, alpha]) => (
      <PropertyRow key={label} label={label} indent>
        {id => <><Swatch id={id} $color={color} $alpha={alpha} /><Picker aria-label={`Sample ${label}`}><Dropper /></Picker></>}
      </PropertyRow>
    ))}
    <PropertyRow label="Color Multiplier" indent>
      {id => <><Range id={id} type="range" min={1} max={5} defaultValue={1} /><NumberBox aria-label="Multiplier value" defaultValue="1" /></>}
    </PropertyRow>
    <PropertyRow label="Fade Duration" indent>{id => <TextField id={id} defaultValue="0.1" />}</PropertyRow>
    <PropertyRow label="Navigation" space>{id => <Select id={id} value="Automatic" />}</PropertyRow>
    <Spacer $width={1} />
    <Property><span /><Field><WideButton>Visualize</WideButton></Field></Property>
    <PropertyRow label="Fill Rect" space>{id => <ObjectPicker id={id} value="Fill (Rect Transform)" icon={<AnchorMarks size={13} color="#858585" />} />}</PropertyRow>
    <PropertyRow label="Handle Rect">{id => <ObjectPicker id={id} value="None (Rect Transform)" />}</PropertyRow>
    <PropertyRow label="Direction" space>{id => <Select id={id} value="Left To Right" />}</PropertyRow>
    <PropertyRow label="Min Value">{id => <TextField id={id} defaultValue="0" />}</PropertyRow>
    <PropertyRow label="Max Value">{id => <TextField id={id} defaultValue="1" />}</PropertyRow>
    <PropertyRow label="Whole Numbers">{id => <Check id={id} type="checkbox" />}</PropertyRow>
    <PropertyRow label="Value">
      {id => <><Range id={id} type="range" min={0} max={1} step={0.0001} defaultValue={0.9528} /><NumberBox aria-label="Exact value" defaultValue="0.95280" /></>}
    </PropertyRow>
    <EventList>
      <EventHeader>On Value Changed (Single)</EventHeader>
      <EventBody>List is Empty</EventBody>
      <EventButtons>
        <IconButton aria-label="Add event"><svg width="8" height="8" viewBox="0 0 8 8"><path d="M3 0h2v3h3v2H5v3H3V5H0V3h3z" fill="#2e2e2e" /></svg></IconButton>
        <IconButton aria-label="Remove event"><svg width="8" height="8" viewBox="0 0 8 8"><path d="M0 3h8v2H0z" fill="#7c7c7c" /></svg></IconButton>
      </EventButtons>
    </EventList>
  </Component>
);

const Inspector = () => {
  const tag = useId();
  const layer = useId();
  const fixed = useId();
  return (
    <Panel $grow={1}>
      <TabStrip>
        <Tab $active><FaInfoCircle size={11} color="#2b2b2b" />Inspector</Tab>
        <Tab>Services</Tab>
        <TabTools><Lock /><PanelMenu /></TabTools>
      </TabStrip>
      <InspectorBody>
        <ObjectHeader>
          <ObjectMark>
            <CubeIcon />
            <Check type="checkbox" aria-label="Active" defaultChecked />
            <label htmlFor={tag}>Tag</label>
          </ObjectMark>
          <HeaderLines>
            <HeaderLine>
              <TextField aria-label="Object name" defaultValue="Slider" />
              <Check id={fixed} type="checkbox" />
              <label htmlFor={fixed}>Static</label>
              <Caret width={9} />
            </HeaderLine>
            <HeaderLine>
              <Select id={tag} value="Untagged" grow={224} />
              <label htmlFor={layer}>Layer</label>
              <Select id={layer} value="UI" grow={211} />
            </HeaderLine>
          </HeaderLines>
        </ObjectHeader>
        <RectTransform />
        <SliderScript />
        <AddButton>Add Component</AddButton>
        <Intercepted>Intercepted Events<Grip /></Intercepted>
      </InspectorBody>
    </Panel>
  );
};

export default function App() {
  return (
    <Window>
      <GlobalStyle />
      <TitleBar>
        <UnityLogo size={15} />
        <WindowTitle>Unity 2017.4.4f1 Personal (64bit) - Main.unity - OW - PC, Mac &amp; Linux Standalone* &lt;DX11&gt;</WindowTitle>
        <ToolGroup>
          <CaptionButton aria-label="Minimize"><svg width="11" height="11" viewBox="0 0 11 11" stroke="#000"><path d="M0 5.500h10" /></svg></CaptionButton>
          <CaptionButton aria-label="Restore"><svg width="11" height="11" viewBox="0 0 11 11" fill="none" stroke="#000"><path d="M.5 2.500h8v8h-8zM2.500 2.500v-2h8v8h-2" /></svg></CaptionButton>
          <CaptionButton aria-label="Close"><svg width="11" height="11" viewBox="0 0 11 11" stroke="#000"><path d="M.5.5l10 10M10.500.5l-10 10" /></svg></CaptionButton>
        </ToolGroup>
      </TitleBar>
      <MenuBar>
        {['File', 'Edit', 'Assets', 'GameObject', 'Component', 'Window', 'Help'].map(m => <MenuItem key={m}>{m}</MenuItem>)}
      </MenuBar>
      <MainToolbar>
        <LeftTools>
          <Segments>
            <Segment $width={32} aria-label="Hand"><Hand size={17} strokeWidth={1.7} /></Segment>
            <Segment $width={32} aria-label="Move"><FaArrowsAlt size={17} /></Segment>
            <Segment $width={32} aria-label="Rotate"><FaSyncAlt size={14} /></Segment>
            <Segment $width={32} aria-label="Scale"><ScaleIcon /></Segment>
            <Segment $width={32} $active aria-label="Rect"><RectIcon /></Segment>
            <Segment $width={31} aria-label="Transform"><TransformIcon /></Segment>
          </Segments>
          <Segments>
            <Segment $width={64} $small><PivotIcon />Center</Segment>
            <Segment $width={63} $small><LocalIcon />Local</Segment>
          </Segments>
        </LeftTools>
        <PlayControls>
          <Segment $width={31} $active aria-label="Play"><PlayIcon kind="play" /></Segment>
          <Segment $width={32} aria-label="Pause"><PlayIcon kind="pause" /></Segment>
          <Segment $width={32} aria-label="Step"><PlayIcon kind="step" /></Segment>
        </PlayControls>
        <RightTools>
          <ToolCluster>
            <ToolButton $width={78} $dim><FaCheckCircle size={12} />Collab<Caret /></ToolButton>
            <ToolButton $width={32} aria-label="Cloud"><Cloud size={14} /></ToolButton>
            <ToolMenu $width={80}>Account<Caret /></ToolMenu>
          </ToolCluster>
          <ToolCluster>
            <ToolMenu $width={80}>Layers<Caret /></ToolMenu>
            <ToolMenu $width={80}>Layout<Caret /></ToolMenu>
          </ToolCluster>
        </RightTools>
      </MainToolbar>
      <Docks>
        <Column>
          <ScenePanel />
          <GamePanel />
        </Column>
        <Column>
          <HierarchyPanel />
          <ProjectPanel />
        </Column>
        <Column>
          <Inspector />
        </Column>
      </Docks>
      <StatusBar />
    </Window>
  );
}
